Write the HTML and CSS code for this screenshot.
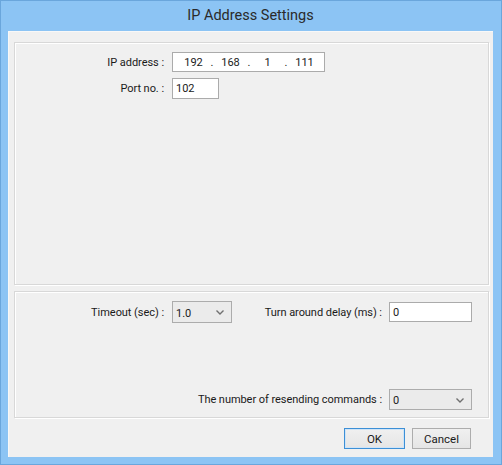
FILE: index.html
```html
<!DOCTYPE html>
<html lang="en">
<head>
<meta charset="utf-8">
<title>IP Address Settings</title>
<link rel="stylesheet" href="styles.css">
</head>
<body>
<div class="window">
  <div class="titlebar">IP Address Settings</div>
  <div class="client">
    <div class="group group-top">
      <div class="form-grid">
        <label class="lbl">IP address :</label>
        <div class="field ip-field">
          <span class="seg">192</span><span class="dot">.</span>
          <span class="seg">168</span><span class="dot">.</span>
          <span class="seg">1</span><span class="dot">.</span>
          <span class="seg">111</span>
        </div>
        <label class="lbl">Port no. :</label>
        <div class="field port-field">102</div>
      </div>
    </div>
    <div class="group group-bottom">
      <div class="comm-grid">
        <label class="lbl lbl-a">Timeout (sec) :</label>
        <div class="combo combo-timeout"><span class="combo-val">1.0</span>
          <svg class="chev" width="8" height="5" viewBox="0 0 8 5"><polyline points="0.5,0.5 4,4 7.5,0.5" fill="none" stroke="#707070" stroke-width="1.4"/></svg>
        </div>
        <label class="lbl lbl-b">Turn around delay (ms) :</label>
        <div class="field delay-field">0</div>
        <label class="lbl lbl-resend">The number of resending commands :</label>
        <div class="combo combo-resend"><span class="combo-val">0</span>
          <svg class="chev" width="8" height="5" viewBox="0 0 8 5"><polyline points="0.5,0.5 4,4 7.5,0.5" fill="none" stroke="#707070" stroke-width="1.4"/></svg>
        </div>
      </div>
    </div>
    <div class="buttons">
      <button class="btn btn-default">OK</button>
      <button class="btn btn-cancel">Cancel</button>
    </div>
  </div>
</div>
</body>
</html>
```

FILE: styles.css
```css
* { box-sizing: border-box; }
html, body { margin: 0; padding: 0; }
body {
  width: 502px;
  height: 465px;
  font-family: Roboto, "Open Sans", sans-serif;
  font-size: 11px;
  letter-spacing: -0.05px;
  color: #1a1a1a;
  background: #8cc4f4;
}
.window {
  width: 502px;
  height: 465px;
  display: flex;
  flex-direction: column;
  background: #8cc4f4;
  box-shadow: inset 0 0 0 1px #6aa6dc;
  padding: 0 9px 8px 8px;
}
.titlebar {
  height: 31px;
  display: flex;
  align-items: center;
  justify-content: center;
  font-size: 14.5px;
  letter-spacing: 0;
  color: #2a2a2a;
  padding-bottom: 1px;
}
.client {
  flex: 1;
  background: #f0f0f0;
  border-top: 1px solid #f8f8f8;
  border-left: 1px solid #f8f8f8;
  display: flex;
  flex-direction: column;
  padding: 10px 4px 0 5px;
}
.group {
  border: 1px solid #d8d8d8;
  box-shadow: inset 1px 1px 0 #ffffff, 1px 1px 0 #ffffff;
}
.group-top {
  height: 243px;
  padding-top: 9px;
}
.group-bottom {
  height: 127px;
  margin-top: 6px;
  padding: 9px 0 7px 0;
}
.form-grid {
  display: grid;
  grid-template-columns: 157px auto;
  grid-template-rows: 20px 20px;
  row-gap: 6px;
  align-items: center;
  justify-items: start;
}
.lbl {
  justify-self: end;
  padding-right: 8px;
  white-space: nowrap;
}
.field {
  height: 20px;
  background: #fff;
  border: 1px solid #ababab;
  display: flex;
  align-items: center;
  padding-left: 3px;
}
.ip-field {
  width: 153px;
  padding-left: 4px;
}
.seg {
  width: 33px;
  text-align: center;
}
.dot {
  width: 4px;
  text-align: center;
}
.port-field {
  width: 47px;
  height: 21px;
}
.comm-grid {
  height: 100%;
  display: grid;
  grid-template-columns: 157px 60px 157px 83px;
  grid-template-rows: 22px 1fr 21px;
  align-items: center;
}
.lbl-b { padding-right: 7px; }
.lbl-resend {
  grid-column: 1 / 4;
  grid-row: 3;
  padding-right: 7px;
}
.delay-field {
  width: 83px;
}
.combo {
  height: 22px;
  border: 1px solid #acacac;
  background: #ebebeb;
  display: flex;
  align-items: center;
  justify-content: space-between;
  padding: 2px 7px 0 3px;
}
.combo-timeout { width: 60px; }
.combo-resend {
  grid-column: 4;
  grid-row: 3;
  width: 83px;
  height: 21px;
}
.chev { display: block; margin-top: -1px; }
.buttons {
  display: flex;
  justify-content: flex-end;
  gap: 7px;
  margin-top: 10px;
  padding-right: 18px;
}
.btn {
  font-family: inherit;
  font-size: 11.5px;
  color: #1a1a1a;
  height: 21px;
  border: 1px solid #adadad;
  background: linear-gradient(#f0f0f0, #e5e5e5);
  padding: 0;
}
.btn-default {
  width: 61px;
  border-color: #3c8fd6;
  box-shadow: inset 0 0 0 1px #cfe4f7;
}
.btn-cancel { width: 59px; }
```
